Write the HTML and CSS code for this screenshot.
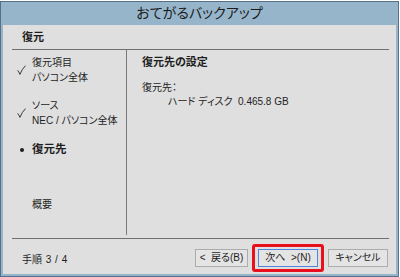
FILE: index.html
```html
<!DOCTYPE html>
<html lang="ja">
<head>
<meta charset="utf-8">
<title>おてがるバックアップ</title>
<link rel="stylesheet" href="styles.css">
</head>
<body>
<div class="window">
  <div class="titlebar">おてがるバックアップ</div>
  <div class="client">
    <div class="header">復元</div>
    <div class="rule"></div>
    <div class="main">
      <ul class="steps">
        <li class="step done">
          <span class="mark"><svg class="check" width="9" height="10" viewBox="0 0 9 10"><path d="M0.6 5.4 Q2 6.8 2.9 9.4 Q5 4 8.5 0.6" fill="none" stroke="#3a3a3a" stroke-width="1"/></svg></span>
          <span class="label">復元項目<br>パソコン全体</span>
        </li>
        <li class="step done second">
          <span class="mark"><svg class="check" width="9" height="10" viewBox="0 0 9 10"><path d="M0.6 5.4 Q2 6.8 2.9 9.4 Q5 4 8.5 0.6" fill="none" stroke="#3a3a3a" stroke-width="1"/></svg></span>
          <span class="label">ソース<br>NEC / パソコン全体</span>
        </li>
        <li class="step current">
          <span class="mark"><span class="dot"></span></span>
          <span class="label">復元先</span>
        </li>
        <li class="step todo">
          <span class="mark"></span>
          <span class="label">概要</span>
        </li>
      </ul>
      <div class="divider"></div>
      <div class="pane">
        <div class="pane-title">復元先の設定</div>
        <div class="field-label">復元先：</div>
        <div class="field-value">ハード ディスク&nbsp;&nbsp;0.465.8 GB</div>
      </div>
    </div>
    <div class="rule"></div>
    <div class="footer">
      <span class="step-count">手順 3 / 4</span>
      <div class="buttons">
        <button class="btn back">&lt;&nbsp; 戻る(B)</button>
        <span class="highlight"><button class="btn next">次へ&nbsp;&nbsp;&gt;(N)</button></span>
        <button class="btn cancel">キャンセル</button>
      </div>
    </div>
  </div>
</div>
</body>
</html>
```

FILE: styles.css
```css
html, body {
  margin: 0;
  padding: 0;
  background: #ffffff;
}

body {
  font-family: "Liberation Sans", "Noto Sans CJK JP", sans-serif;
  font-size: 10px;
  color: #1e1e1e;
  font-feature-settings: "palt";
}

.window {
  box-sizing: border-box;
  width: 399px;
  height: 276px;
  margin-top: 1px;
  border: 1px solid #56708a;
  background: #97b5ca;
  padding: 0 2px 2px 2px;
  display: flex;
  flex-direction: column;
}

.titlebar {
  height: 23px;
  line-height: 23px;
  text-align: center;
  font-size: 14px;
  color: #1c1c1c;
  flex: none;
}

.client {
  flex: 1;
  background: #dfdfdf;
  display: flex;
  flex-direction: column;
  min-height: 0;
}

.header {
  height: 24px;
  line-height: 24px;
  padding-left: 19px;
  font-weight: bold;
  font-size: 11px;
  flex: none;
}

.rule {
  height: 1px;
  background: #707070;
  margin: 0 7px 0 9px;
  flex: none;
}

.main {
  flex: 1;
  display: flex;
  min-height: 0;
}

.steps {
  list-style: none;
  margin: 0;
  padding: 5px 0 0 14px;
  width: 109px;
  flex: none;
}

.step {
  display: flex;
  line-height: 15px;
}

.step.second {
  margin-top: 13px;
}

.step.current {
  margin-top: 14px;
  font-weight: bold;
  font-size: 11.5px;
}

.step.todo {
  margin-top: 40px;
}

.mark {
  width: 15px;
  flex: none;
  position: relative;
}

.check {
  display: block;
  margin-top: 10px;
}

.dot {
  display: block;
  width: 4px;
  height: 4px;
  border-radius: 50%;
  background: #1e1e1e;
  margin: 6px 0 0 3px;
}

.divider {
  width: 1px;
  background: #7a7a7a;
  margin-bottom: 3px;
  flex: none;
}

.pane {
  flex: 1;
  padding: 5px 0 0 15px;
}

.pane-title {
  font-weight: bold;
  font-size: 11px;
  line-height: 15px;
}

.field-label {
  margin-top: 11px;
  line-height: 14px;
}

.field-value {
  line-height: 14px;
  padding-left: 26px;
}

.footer {
  height: 35px;
  flex: none;
  display: flex;
  align-items: flex-start;
  justify-content: space-between;
  padding: 0 8px 0 19px;
}

.step-count {
  line-height: 15px;
  margin-top: 13px;
  word-spacing: 1px;
}

.buttons {
  display: flex;
  align-items: flex-start;
  margin-top: 10px;
}

.btn {
  font-family: inherit;
  font-size: 10px;
  font-feature-settings: "palt";
  color: #1e1e1e;
  height: 18px;
  line-height: 16px;
  padding: 0;
  margin: 0;
  background: #e4e4e4;
  border: 1px solid #acacac;
  box-sizing: border-box;
  display: block;
}

.back {
  width: 53px;
}

.highlight {
  position: relative;
  display: block;
  margin-left: 10px;
}

.highlight::after {
  content: "";
  position: absolute;
  left: -6px;
  right: -6px;
  top: -5px;
  bottom: -5px;
  border: 3px solid #e8101c;
  border-radius: 3px;
}

.next {
  width: 60px;
  border-color: #4d87e0;
}

.cancel {
  width: 60px;
  margin-left: 10px;
}
```
